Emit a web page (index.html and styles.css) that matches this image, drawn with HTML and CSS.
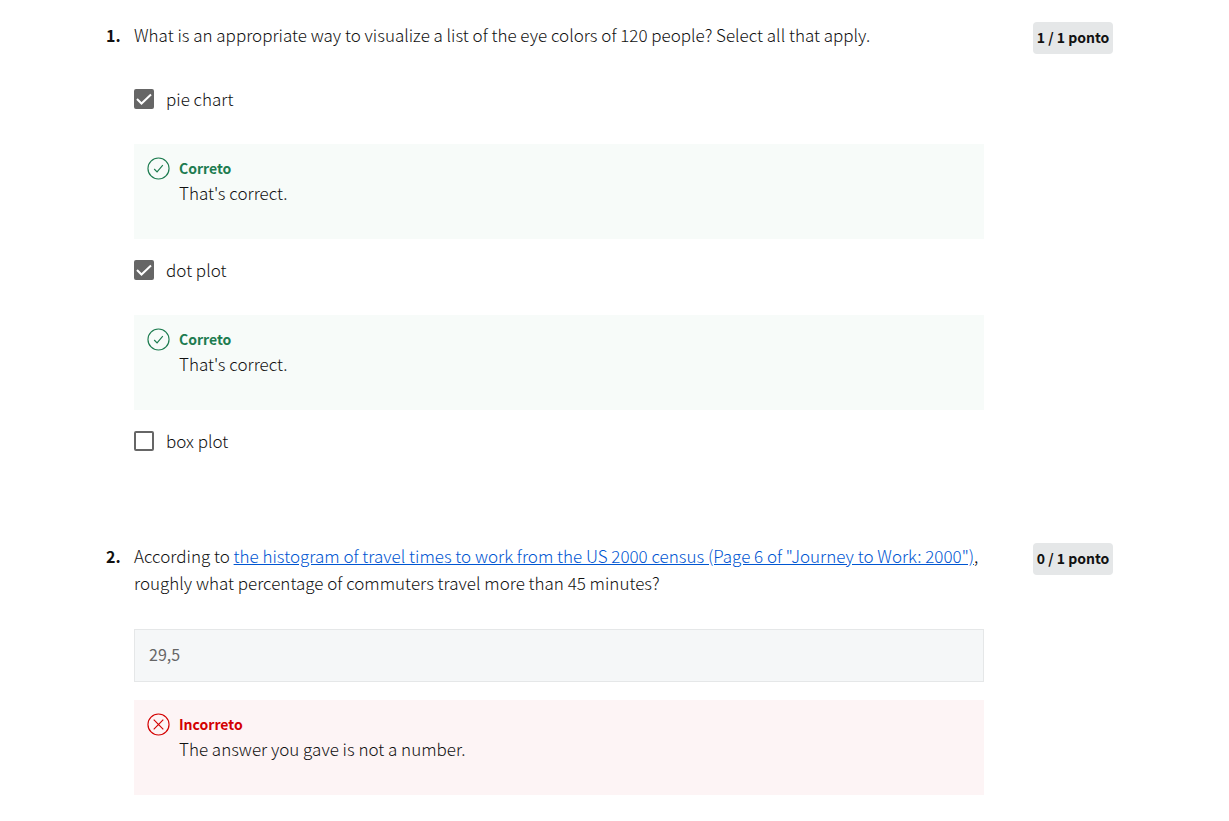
FILE: index.html
```html
<!DOCTYPE html>
<html lang="pt-BR">
<head>
<meta charset="utf-8">
<meta name="viewport" content="width=device-width, initial-scale=1">
<title>Quiz</title>
<link rel="stylesheet" href="styles.css">
</head>
<body>
<main class="quiz">
  <section class="question">
    <span class="number">1.</span>
    <div class="body">
      <p class="prompt">What is an appropriate way to visualize a list of the eye colors of 120 people? Select all that apply.</p>
      <div class="options">
        <label class="option" for="pie"><input class="check" type="checkbox" id="pie" checked><span>pie chart</span></label>
        <div class="feedback correct">
          <svg class="icon" viewBox="0 0 24 24" aria-hidden="true"><circle cx="12" cy="12" r="11"/><path d="M7.500 12.500l3 3 6-7"/></svg>
          <div><strong class="verdict">Correto</strong><p class="detail">That's correct.</p></div>
        </div>
        <label class="option" for="dot"><input class="check" type="checkbox" id="dot" checked><span>dot plot</span></label>
        <div class="feedback correct">
          <svg class="icon" viewBox="0 0 24 24" aria-hidden="true"><circle cx="12" cy="12" r="11"/><path d="M7.500 12.500l3 3 6-7"/></svg>
          <div><strong class="verdict">Correto</strong><p class="detail">That's correct.</p></div>
        </div>
        <label class="option" for="box"><input class="check" type="checkbox" id="box"><span>box plot</span></label>
      </div>
    </div>
    <span class="points">1 / 1 ponto</span>
  </section>
  <section class="question">
    <span class="number">2.</span>
    <div class="body">
      <p class="prompt" id="prompt-2">According to <a class="link" href="#census">the histogram of travel times to work from the US 2000 census (Page 6 of "Journey to Work: 2000")</a>, roughly what percentage of commuters travel more than 45 minutes?</p>
      <input class="answer" type="text" value="29,5" aria-labelledby="prompt-2" readonly>
      <div class="feedback incorrect">
        <svg class="icon" viewBox="0 0 24 24" aria-hidden="true"><circle cx="12" cy="12" r="11"/><path d="M7 7l10 10M17 7L7 17"/></svg>
        <div><strong class="verdict">Incorreto</strong><p class="detail">The answer you gave is not a number.</p></div>
      </div>
    </div>
    <span class="points">0 / 1 ponto</span>
  </section>
</main>
</body>
</html>
```
FILE: styles.css
```css
* { box-sizing: border-box; }
body {
  margin: 0;
  background: #fff;
  color: #111;
  font-family: "Noto Sans CJK SC", "Open Sans", sans-serif;
  font-size: 17px;
  font-weight: 300;
  line-height: 27px;
}
p { margin: 0; }
.quiz {
  display: flex;
  flex-direction: column;
  gap: 88px;
  padding: 21px 116px 24px 106px;
}
.question {
  display: grid;
  grid-template-columns: 28px 1fr 129px;
  align-items: start;
}
.number {
  font-size: 16px;
  font-weight: 700;
  line-height: 29px;
}
.points {
  justify-self: end;
  min-width: 80px;
  margin-top: 1px;
  padding: 0 3px 2px;
  border-radius: 4px;
  background: #e5e7e8;
  font-size: 14px;
  font-weight: 700;
  line-height: 30px;
  text-align: center;
  white-space: nowrap;
}
.options { margin-top: 37px; }
.option {
  display: flex;
  align-items: center;
  gap: 12px;
}
.check {
  appearance: none;
  flex: none;
  width: 20px;
  height: 20px;
  margin: 0;
  border: 2px solid #666;
  border-radius: 2px;
  background: #fff;
}
.check:checked {
  background: #666 url("data:image/svg+xml,%3Csvg xmlns='http://www.w3.org/2000/svg' viewBox='0 0 16 16'%3E%3Cpath d='M1 8l4.500 4.500L15 3.500' fill='none' stroke='white' stroke-width='2'/%3E%3C/svg%3E") center / 16px no-repeat;
}
.feedback {
  display: flex;
  gap: 9px;
  min-height: 95px;
  margin: 18px 0 17px;
  padding: 12px 13px;
}
.option + .feedback { margin-top: 32px; }
.body > .feedback { margin-bottom: 0; }
.correct { background: #f7fbf9; }
.incorrect { background: #fdf4f5; }
.icon {
  flex: none;
  width: 23px;
  height: 23px;
  margin-top: 1px;
  fill: none;
  stroke: currentColor;
  stroke-width: 1.2;
}
.correct .icon, .correct .verdict { color: #1d7c50; }
.incorrect .icon, .incorrect .verdict { color: #d30001; }
.verdict {
  display: block;
  font-size: 14px;
  font-weight: 700;
  line-height: 25px;
}
.detail { line-height: 24px; }
.link {
  color: #0056d2;
  text-decoration: underline;
}
.answer {
  display: block;
  width: 100%;
  height: 53px;
  margin-top: 33px;
  padding: 0 14px 3px;
  border: 1px solid #e5e7e8;
  border-radius: 0;
  background: #f5f7f8;
  color: #666;
  font-family: inherit;
  font-size: 16px;
}
```
